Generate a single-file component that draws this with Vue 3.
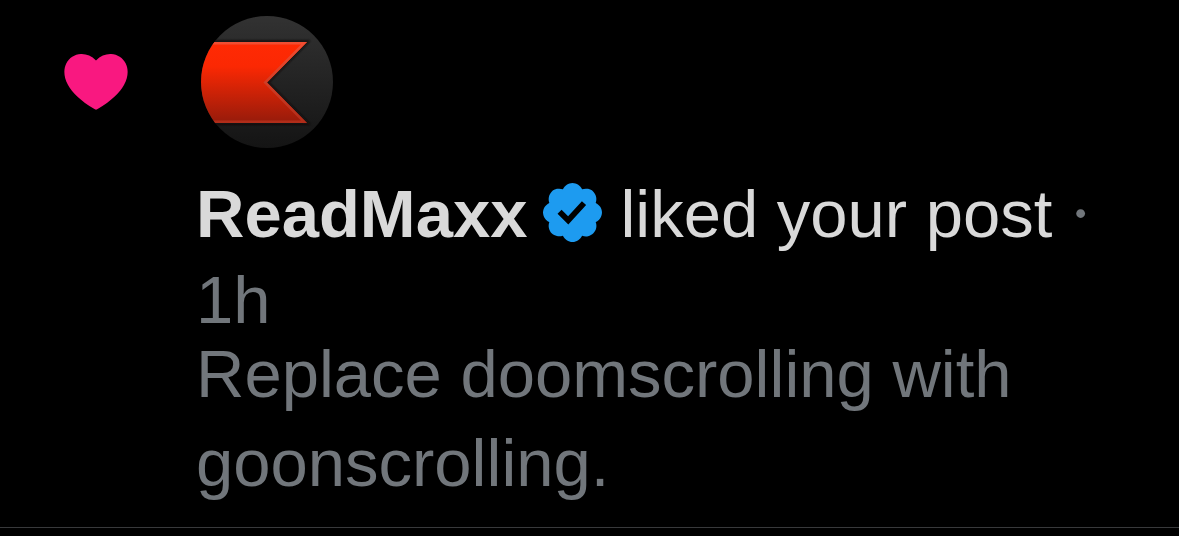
<script setup>
const notification = {
  name: 'ReadMaxx',
  action: 'liked your post',
  age: '1h',
  post: 'Replace doomscrolling with goonscrolling.',
}
</script>

<template>
  <article class="notification">
    <svg class="heart" viewBox="2 3.5 20 17.7" role="img" aria-label="Like">
      <path d="M20.884 13.19c-1.351 2.48-4.001 5.12-8.379 7.67l-.503.3-.504-.3c-4.379-2.55-7.029-5.19-8.382-7.67-1.36-2.5-1.41-4.86-.514-6.67.887-1.79 2.647-2.91 4.601-3.01 1.651-.09 3.368.56 4.798 2.01 1.429-1.45 3.146-2.1 4.796-2.01 1.954.1 3.714 1.22 4.601 3.01.896 1.81.846 4.17-.514 6.67z" />
    </svg>
    <div class="content">
      <svg class="avatar" viewBox="0 0 132 132" role="img" aria-label="ReadMaxx avatar">
        <defs>
          <linearGradient id="disc" x1="0" y1="0" x2="0" y2="1">
            <stop offset="0" stop-color="#323232" />
            <stop offset="1" stop-color="#141414" />
          </linearGradient>
          <linearGradient id="ribbon" x1="0" y1="0" x2="0" y2="1">
            <stop offset="0" stop-color="#ff2a04" />
            <stop offset="0.3" stop-color="#fb2803" />
            <stop offset="1" stop-color="#961b0b" />
          </linearGradient>
          <linearGradient id="edge" x1="0" y1="0" x2="0" y2="1">
            <stop offset="0" stop-color="#f24e32" />
            <stop offset="1" stop-color="#b02c19" />
          </linearGradient>
          <clipPath id="round"><circle cx="66" cy="66" r="66" /></clipPath>
          <clipPath id="flag"><path d="M-4 26H106L66 66.500 106 107H-4z" /></clipPath>
          <filter id="shade" x="-10%" y="-10%" width="120%" height="120%">
            <feGaussianBlur stdDeviation="1.2" />
          </filter>
        </defs>
        <g clip-path="url(#round)">
          <rect width="132" height="132" fill="url(#disc)" />
          <path d="M-4 26H106L66 66.500 106 107H-4z" fill="none" stroke="#160d0b" stroke-width="3" filter="url(#shade)" />
          <path d="M-4 26H106L66 66.500 106 107H-4z" fill="url(#ribbon)" />
          <path d="M-4 26H106L66 66.500 106 107H-4z" fill="none" stroke="url(#edge)" stroke-width="5" clip-path="url(#flag)" />
        </g>
      </svg>
      <p class="headline">
        <strong>{{ notification.name }}</strong>
        <svg class="badge" viewBox="1.6 1.6 18.8 18.8" role="img" aria-label="Verified account">
          <path d="M20.396 11c-.018-.646-.215-1.275-.57-1.816-.354-.54-.852-.972-1.438-1.246.223-.607.27-1.264.14-1.897-.131-.634-.437-1.218-.882-1.687-.47-.445-1.053-.75-1.687-.882-.633-.13-1.29-.083-1.897.14-.273-.587-.704-1.086-1.245-1.44S11.647 1.62 11 1.604c-.646.017-1.273.213-1.813.568s-.969.854-1.24 1.44c-.608-.223-1.267-.272-1.902-.14-.635.13-1.22.436-1.69.882-.445.47-.749 1.055-.878 1.688-.13.633-.08 1.29.144 1.896-.587.274-1.087.705-1.443 1.245-.356.54-.555 1.17-.574 1.817.02.647.218 1.276.574 1.817.356.54.856.972 1.443 1.245-.224.606-.274 1.263-.144 1.896.13.634.433 1.218.877 1.688.47.443 1.054.747 1.687.878.633.132 1.29.084 1.897-.136.274.586.705 1.084 1.246 1.439.54.354 1.17.551 1.816.569.647-.016 1.276-.213 1.817-.567s.972-.854 1.245-1.44c.604.239 1.266.296 1.903.164.636-.132 1.22-.447 1.68-.907.46-.46.776-1.044.908-1.681s.075-1.299-.165-1.903c.586-.274 1.084-.705 1.439-1.246.354-.54.551-1.17.569-1.816zM9.662 14.85l-3.429-3.428 1.293-1.302 2.072 2.072 4.4-4.794 1.347 1.246z" />
        </svg>
        <span>{{ notification.action }}</span>
        {{ ' ' }}<span class="dot">·</span>
        {{ ' ' }}<time class="age">{{ notification.age }}</time>
      </p>
      <p class="post">{{ notification.post }}</p>
    </div>
  </article>
</template>

<style>
body {
  margin: 0;
  background: #000;
}
</style>

<style scoped>
.notification {
  display: flex;
  align-items: flex-start;
  gap: 68px;
  padding: 16px 72px 20px 64px;
  border-bottom: 1px solid #38393b;
  font-family: "Liberation Sans", Arial, sans-serif;
  font-size: 67px;
  color: #d9d9d9;
}

.heart {
  flex: none;
  width: 64px;
  height: 56px;
  margin-top: 38px;
  fill: #f91880;
}

.content {
  flex: 1;
  min-width: 0;
}

.avatar {
  display: block;
  width: 132px;
  height: 132px;
  margin-left: 5px;
}

.headline {
  margin: 23px 0 0;
  line-height: 86px;
}

.badge {
  width: 59px;
  height: 59px;
  margin: 0 18px 0 16px;
  vertical-align: -5px;
  fill: #1d9bf0;
}

.dot {
  font-family: Inter, sans-serif;
  line-height: 1;
}

.dot,
.age,
.post {
  color: #71767b;
}

.post {
  margin: -14px 0 0;
  line-height: 89px;
}
</style>
